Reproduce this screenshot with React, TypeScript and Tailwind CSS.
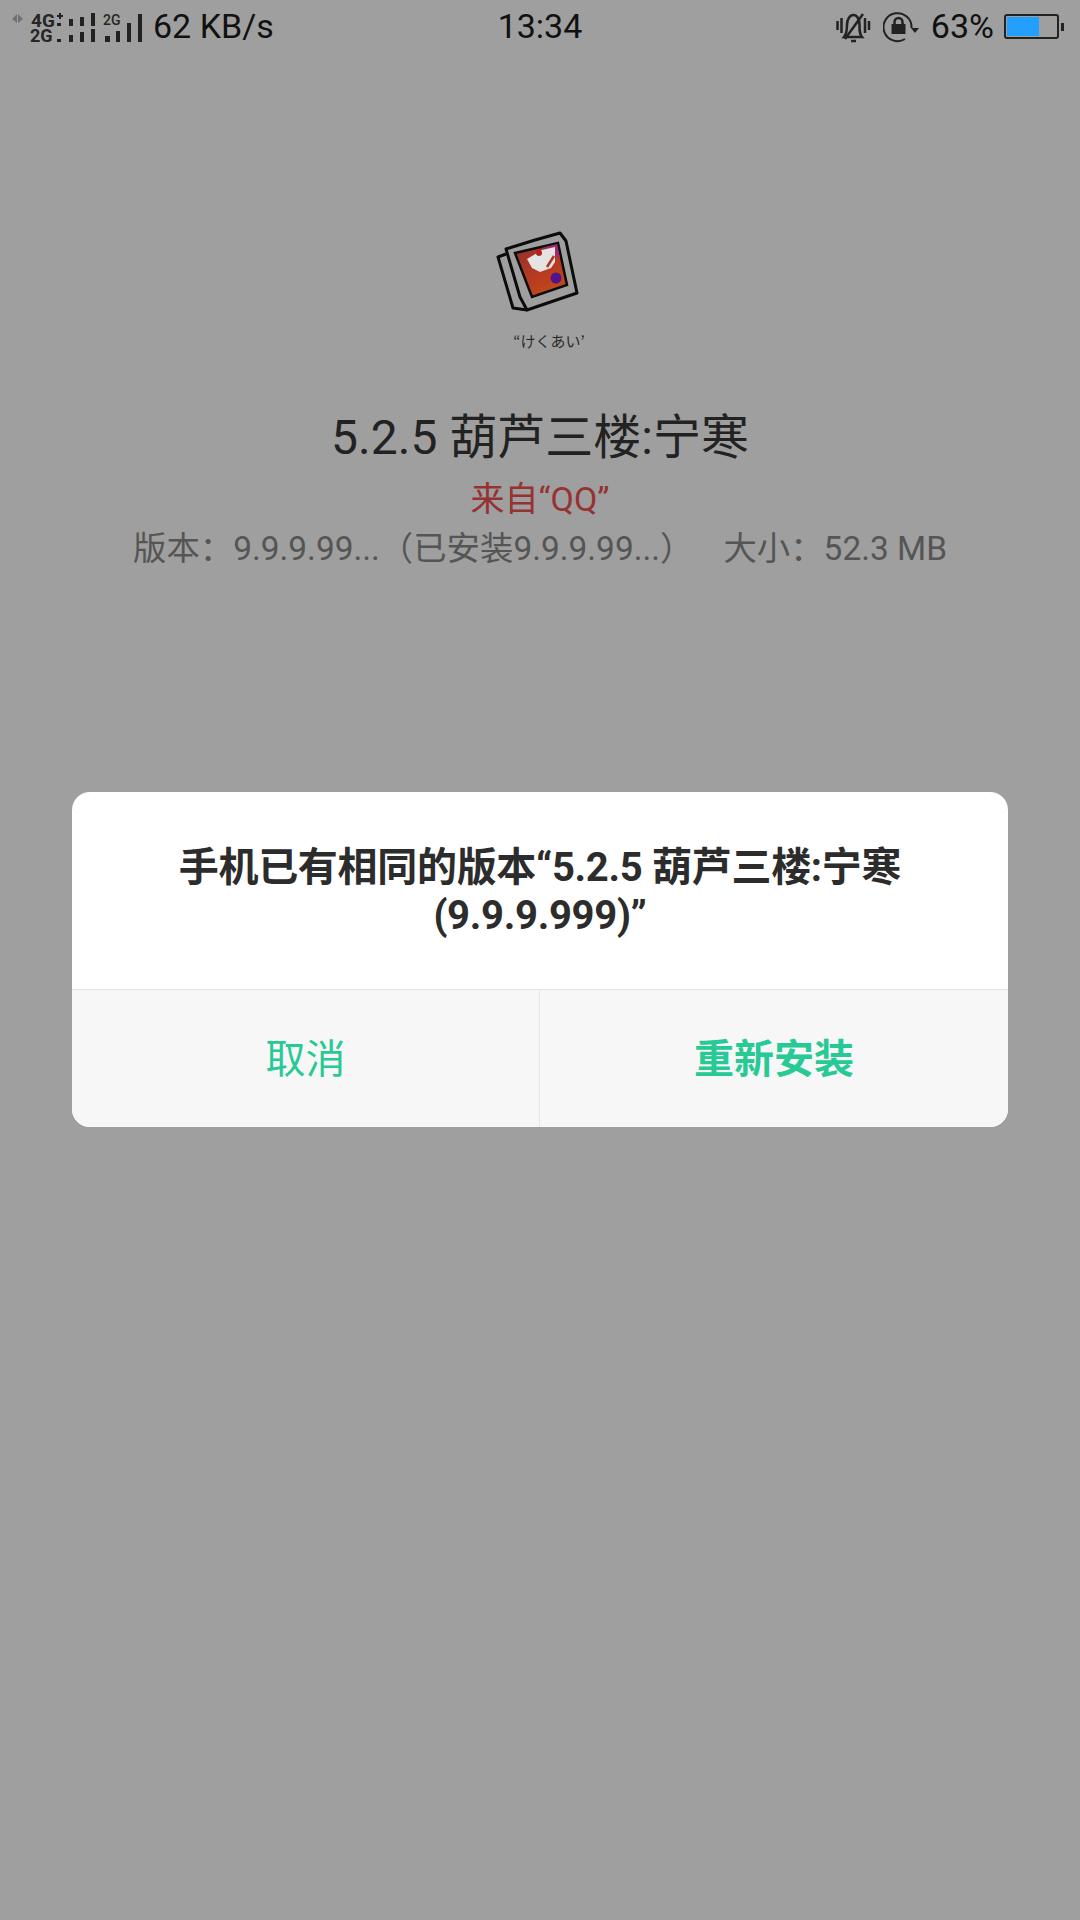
import React from 'react';

const sans = "font-['Roboto','Noto_Sans_CJK_SC',sans-serif]";

const SignalIcons = () => (
  <svg width="146" height="48" viewBox="0 0 146 48" className="shrink-0 self-start">
    <path d="M12 18 17 13v9zM18 13l5 5-5 4z" fill="#707070" />
    <g fontFamily="Roboto, sans-serif" fill="#262626">
      <text x="31" y="26" fontSize="19" fontWeight="700">4G</text>
      <text x="30" y="41" fontSize="18" fontWeight="700">2G</text>
      <text x="103" y="24" fontSize="14" fontWeight="500">2G</text>
    </g>
    <g fill="#222">
      <rect x="57" y="14" width="6" height="2" />
      <rect x="59" y="12" width="2" height="6" />
      <rect x="57" y="22" width="4" height="3" />
      <rect x="57" y="38" width="4" height="3" />
      <rect x="69" y="18" width="4" height="7" />
      <rect x="80" y="16" width="4" height="9" />
      <rect x="91" y="12" width="4" height="13" />
      <rect x="69" y="34" width="4" height="7" />
      <rect x="80" y="31" width="4" height="10" />
      <rect x="91" y="28" width="4" height="13" />
      <rect x="105" y="35" width="5" height="6" />
      <rect x="116" y="30" width="4" height="11" />
      <rect x="127" y="22" width="4" height="19" />
      <rect x="138" y="13" width="4" height="28" />
    </g>
  </svg>
);

const BellOff = () => (
  <svg width="36" height="32" viewBox="0 0 36 32" fill="none" stroke="#222" strokeWidth="2.500" className="shrink-0">
    <path d="M2.500 10v9M6.500 7v15M30 7v15M34 10v9" />
    <path d="M9 26c2.500-3 3-6 3-12 0-6 3-10 6.500-10s6 4 6 10c0 6 0 9 2.500 12z" />
    <path d="M28 3 10 28M16 30h5" />
  </svg>
);

const RotationLock = () => (
  <svg width="37" height="32" viewBox="0 0 37 32" fill="none" className="shrink-0">
    <path d="M28.500 17A14 14 0 1 0 22 28" stroke="#222" strokeWidth="2" />
    <path d="M28 17h8l-4 5z" fill="#222" />
    <rect x="8.500" y="13" width="14" height="10" fill="#222" />
    <path d="M11.500 13v-2a4 4 0 0 1 8 0v2" stroke="#222" strokeWidth="2.500" />
  </svg>
);

const Battery = () => (
  <div className="flex items-center">
    <div className="w-[55px] h-[25px] border-2 border-[#222] rounded-[3px] p-[1px] flex">
      <div className="w-[32px] bg-[#23a0ff]" />
    </div>
    <div className="w-[3px] h-[8px] bg-[#222] ml-[2px]" />
  </div>
);

const StatusBar = () => (
  <div className={`${sans} h-[53px] flex items-center justify-between text-[#111] text-[34px]`}>
    <div className="flex items-center w-[300px]">
      <SignalIcons />
      <span className="ml-[7px] whitespace-nowrap">62 KB/s</span>
    </div>
    <span>13:34</span>
    <div className="flex items-center justify-end w-[300px] pr-[16px]">
      <BellOff />
      <div className="ml-[12px]"><RotationLock /></div>
      <span className="ml-[11px] mr-[10px]">63%</span>
      <Battery />
    </div>
  </div>
);

const AppLogo = () => (
  <svg width="110" height="104" viewBox="0 0 110 104" className="shrink-0">
    <defs>
      <linearGradient id="art" x1="0" y1="0" x2="0.6" y2="1">
        <stop offset="0" stopColor="#8f3030" />
        <stop offset="0.6" stopColor="#b53a20" />
        <stop offset="1" stopColor="#c2491c" />
      </linearGradient>
    </defs>
    <path d="M36 44 28 47 43 98 57 100" fill="none" stroke="#0c0c0c" strokeWidth="3" strokeLinejoin="round" />
    <path d="M36 39 65 30 90 23 96 31 107 83 57 100 50 87z" fill="#9f9f9f" stroke="#0c0c0c" strokeWidth="3" strokeLinejoin="round" />
    <path d="M45 43 88 33 97 75 62 87z" fill="url(#art)" stroke="#0c0c0c" strokeWidth="2.500" />
    <path d="M72 38 87 34 90 48z" fill="#a02a70" />
    <path d="M57 49 72 40 85 37 85 52 81 58 70 62 62 58z" fill="#e6e3e3" />
    <circle cx="69" cy="43" r="3" fill="#b52020" />
    <path d="M77 57 84 46" stroke="#a53a2c" strokeWidth="2.500" fill="none" />
    <circle cx="86" cy="68" r="5.500" fill="#53128e" />
  </svg>
);

export default function App() {
  return (
    <div className={`${sans} w-[1080px] h-[1920px] bg-[#9f9f9f] overflow-hidden`}>
      <StatusBar />

      <div className="flex flex-col items-center mt-[157px]">
        <div className="mr-[30px]"><AppLogo /></div>
        <div className="mt-[17px] ml-[18px] h-[20px] leading-[20px] text-[15px] text-[#2a2a2a] font-['Noto_Sans_CJK_JP',sans-serif]">“けくあい’</div>
        <h1 className="mt-[57px] h-[60px] leading-[60px] text-[48px] text-[#222] whitespace-nowrap">5.2.5 葫芦三楼:宁寒</h1>
        <p className="mt-[7px] h-[48px] leading-[48px] text-[34px] text-[#963232]">来自“QQ”</p>
        <p className="mt-[2px] h-[48px] leading-[48px] text-[33.4px] text-[#555] whitespace-nowrap flex gap-[30px]">
          <span>版本：9.9.9.99...（已安装9.9.9.99...）</span>
          <span>大小：52.3 MB</span>
        </p>
      </div>

      <div className="mx-[72px] mt-[219px] bg-white rounded-[18px] overflow-hidden">
        <div className="h-[197px] pt-[2px] flex flex-col items-center justify-center text-[40px] leading-[48px] font-bold tracking-[-0.3px] text-[#2c2c2c] text-center">
          <p className="whitespace-nowrap">手机已有相同的版本“5.2.5 葫芦三楼:宁寒</p>
          <p>(9.9.9.999)”</p>
        </div>
        <div className="h-[138px] flex bg-[#f7f7f7] border-t border-[#e2e2e2] text-[40px] text-[#27c994]">
          <button className="w-[468px] border-r border-[#e6e6e6] pt-[2px]">取消</button>
          <button className="flex-1 font-bold pt-[2px]">重新安装</button>
        </div>
      </div>
    </div>
  );
}
